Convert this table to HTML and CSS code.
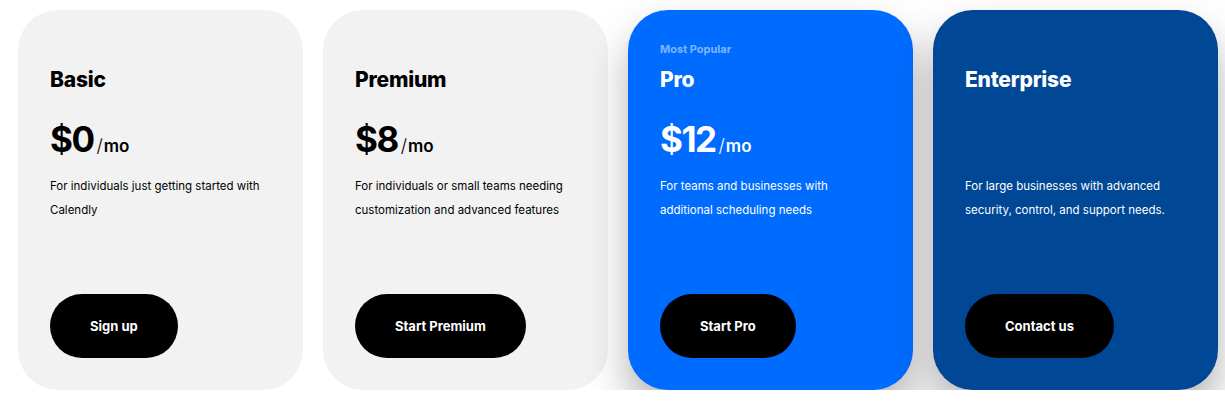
FILE: index.html
```html
<!DOCTYPE html>
<html>
<head>
<meta charset="utf-8">
<link rel="stylesheet" href="styles.css">
</head>
<body>
<div class="plans">
  <div class="card card-light">
    <div class="tag"></div>
    <h2 class="title">Basic</h2>
    <div class="price"><span class="amount">$0</span><span class="slash">/</span><span class="per">mo</span></div>
    <p class="desc">For individuals just getting started with Calendly</p>
    <a class="btn">Sign up</a>
  </div>
  <div class="card card-light">
    <div class="tag"></div>
    <h2 class="title">Premium</h2>
    <div class="price"><span class="amount">$8</span><span class="slash">/</span><span class="per">mo</span></div>
    <p class="desc">For individuals or small teams needing customization and advanced features</p>
    <a class="btn">Start Premium</a>
  </div>
  <div class="card card-pro">
    <div class="tag">Most Popular</div>
    <h2 class="title">Pro</h2>
    <div class="price"><span class="amount">$12</span><span class="slash">/</span><span class="per">mo</span></div>
    <p class="desc">For teams and businesses with additional scheduling needs</p>
    <a class="btn">Start Pro</a>
  </div>
  <div class="card card-ent">
    <div class="tag"></div>
    <h2 class="title">Enterprise</h2>
    <div class="price"></div>
    <p class="desc">For large businesses with advanced security, control, and support needs.</p>
    <a class="btn">Contact us</a>
  </div>
</div>
</body>
</html>
```
FILE: styles.css
```css
* { box-sizing: border-box; }
html, body { margin: 0; padding: 0; background: #fff; }
body {
  font-family: "Inter", "Noto Sans", sans-serif;
  color: #000;
}
.plans {
  display: flex;
  gap: 20px;
  padding: 10px 0 0 18px;
}
.card {
  width: 285px;
  height: 380px;
  border-radius: 40px;
  padding: 30px 32px 32px 32px;
  display: flex;
  flex-direction: column;
  align-items: flex-start;
}
.card-light { background: #f2f2f2; }
.card-pro { background: #006bff; color: #fff; box-shadow: 0 22px 40px rgba(0,0,0,0.3); }
.card-ent { background: #004796; color: #fff; box-shadow: 0 22px 40px rgba(0,0,0,0.3); }
.tag {
  height: 18px;
  font-size: 11px;
  line-height: 18px;
  font-weight: 700;
  color: rgba(255,255,255,0.5);
}
.title {
  margin: 8px 0 0;
  font-size: 21px;
  line-height: 28px;
  font-weight: 800;
  letter-spacing: -0.2px;
}
.price {
  margin-top: 23px;
  height: 44px;
  display: flex;
  align-items: baseline;
}
.amount {
  font-size: 35px;
  line-height: 44px;
  font-weight: 700;
  letter-spacing: -1.5px;
}
.slash {
  font-size: 18px;
  font-weight: 300;
  margin-left: 3px;
}
.per {
  font-size: 17px;
  font-weight: 600;
  margin-left: 1px;
}
.desc {
  margin: 13px 0 0;
  font-size: 11.5px;
  line-height: 24px;
  max-width: 218px;
}
.btn {
  margin-top: auto;
  height: 64px;
  padding: 0 40px;
  border-radius: 32px;
  background: #000;
  color: #fff;
  font-size: 13px;
  font-weight: 700;
  display: flex;
  align-items: center;
  cursor: pointer;
}
```
